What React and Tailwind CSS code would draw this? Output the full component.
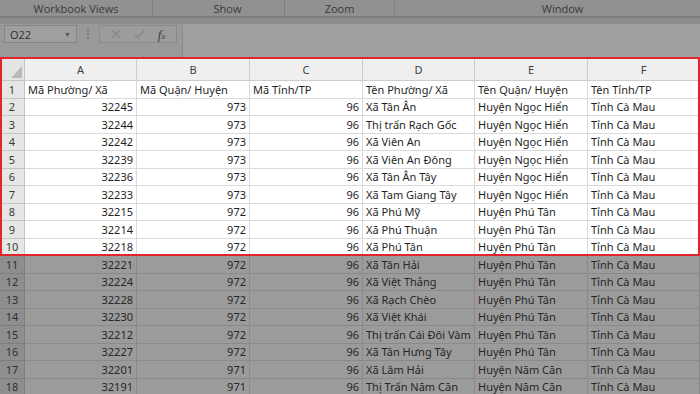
import React from 'react';

const COLS = "grid grid-cols-[25px_112px_113px_113px_112px_113px_112px]";

const rows = [
    ["Mã Phường/ Xã", "Mã Quận/ Huyện", "Mã Tỉnh/TP", "Tên Phường/ Xã", "Tên Quận/ Huyện", "Tên Tỉnh/TP"],
    [32245, 973, 96, "Xã Tân Ân", "Huyện Ngọc Hiển", "Tỉnh Cà Mau"],
    [32244, 973, 96, "Thị trấn Rạch Gốc", "Huyện Ngọc Hiển", "Tỉnh Cà Mau"],
    [32242, 973, 96, "Xã Viên An", "Huyện Ngọc Hiển", "Tỉnh Cà Mau"],
    [32239, 973, 96, "Xã Viên An Đông", "Huyện Ngọc Hiển", "Tỉnh Cà Mau"],
    [32236, 973, 96, "Xã Tân Ân Tây", "Huyện Ngọc Hiển", "Tỉnh Cà Mau"],
    [32233, 973, 96, "Xã Tam Giang Tây", "Huyện Ngọc Hiển", "Tỉnh Cà Mau"],
    [32215, 972, 96, "Xã Phú Mỹ", "Huyện Phú Tân", "Tỉnh Cà Mau"],
    [32214, 972, 96, "Xã Phú Thuận", "Huyện Phú Tân", "Tỉnh Cà Mau"],
    [32218, 972, 96, "Xã Phú Tân", "Huyện Phú Tân", "Tỉnh Cà Mau"],
    [32221, 972, 96, "Xã Tân Hải", "Huyện Phú Tân", "Tỉnh Cà Mau"],
    [32224, 972, 96, "Xã Việt Thắng", "Huyện Phú Tân", "Tỉnh Cà Mau"],
    [32228, 972, 96, "Xã Rạch Chèo", "Huyện Phú Tân", "Tỉnh Cà Mau"],
    [32230, 972, 96, "Xã Việt Khái", "Huyện Phú Tân", "Tỉnh Cà Mau"],
    [32212, 972, 96, "Thị trấn Cái Đôi Vàm", "Huyện Phú Tân", "Tỉnh Cà Mau"],
    [32227, 972, 96, "Xã Tân Hưng Tây", "Huyện Phú Tân", "Tỉnh Cà Mau"],
    [32201, 971, 96, "Xã Lâm Hải", "Huyện Năm Căn", "Tỉnh Cà Mau"],
    [32191, 971, 96, "Thị Trấn Năm Căn", "Huyện Năm Căn", "Tỉnh Cà Mau"],
];

const Row = ({ n, cells, dim }) => {
    const cell = dim
        ? "h-[17.5px] border-r border-b border-[#8a8a8a] bg-[#9b9b9b] text-[#262626]"
        : "h-[17.5px] border-r border-b border-[#dadada] bg-white text-[#1f1f1f]";
    return (
        <div className={COLS}>
            <div className={`h-[17.5px] flex items-center justify-center border-r border-b ${dim ? "bg-[#8e8e8e] border-[#7d7d7d] text-[#2e2e2e]" : "bg-[#e6e6e6] border-[#c4c4c4] text-[#3a3a3a]"}`}>
                {n}
            </div>
            {cells.map((v, i) => (
                <div
                    key={i}
                    className={`${cell} flex items-center px-[3px] whitespace-nowrap ${typeof v === "number" ? "justify-end" : "justify-start overflow-visible"}`}
                >
                    <span className="relative z-10">{v}</span>
                </div>
            ))}
        </div>
    );
};

const App = () => {
    return (
        <div className="w-[700px] h-[394px] overflow-hidden bg-[#9b9b9b] text-[11px] leading-none font-['Noto_Sans',sans-serif]">
            {/* Ribbon group labels */}
            <div className="h-[16px] bg-[#919191] flex items-center text-[11px] text-[#3a3a3a] font-['Open_Sans',sans-serif]">
                <div className="w-[153px] h-full flex items-center justify-center border-r border-[#7f7f7f]">Workbook Views</div>
                <div className="w-[132px] h-full flex items-center justify-center pl-[18px] border-r border-[#7f7f7f]">Show</div>
                <div className="w-[110px] h-full flex items-center justify-center border-r border-[#7f7f7f]">Zoom</div>
                <div className="flex-1 h-full flex items-center justify-center pl-[30px]">Window</div>
            </div>
            <div className="h-[2px] bg-[#7e7e7e]" />
            <div className="h-[6px] bg-[#8b8b8b]" />

            {/* Formula bar */}
            <div className="h-[33px] flex bg-[#999999]">
                <div className="w-[182px] flex items-start pt-[1px] pl-[4px] gap-[10px]">
                    <div className="w-[73px] h-[18px] border border-[#858585] bg-[#9f9f9f] flex items-center justify-between px-[5px] text-[11px] text-[#2f2f2f] font-['Open_Sans',sans-serif]">
                        <span>O22</span>
                        <span className="text-[7px] text-[#555]">▼</span>
                    </div>
                    <div className="flex flex-col gap-[2px] pt-[4px]">
                        <span className="w-[2px] h-[2px] bg-[#7c7c7c]" />
                        <span className="w-[2px] h-[2px] bg-[#7c7c7c]" />
                        <span className="w-[2px] h-[2px] bg-[#7c7c7c]" />
                    </div>
                    <div className="w-[78px] h-[18px] border border-[#8b8b8b] bg-[#9c9c9c] flex items-center justify-around px-[4px]">
                        <svg width="10" height="10" viewBox="0 0 10 10" stroke="#858585" strokeWidth="1.2"><path d="M1 1l8 8M9 1l-8 8" /></svg>
                        <svg width="11" height="10" viewBox="0 0 11 10" stroke="#858585" strokeWidth="1.3" fill="none"><path d="M1 5.5l3 3 6-7" /></svg>
                        <span className="italic text-[13px] text-[#3e3e3e] font-['Liberation_Serif',serif]">f<span className="text-[9px]">x</span></span>
                    </div>
                </div>
                <div className="flex-1 bg-[#a0a0a0] border-l border-[#8a8a8a]" />
            </div>

            {/* Highlighted block */}
            <div className="relative">
                <div className={COLS}>
                    <div className="h-[24px] bg-[#e4e4e4] border-r border-b border-[#c4c4c4] flex items-end justify-end p-[2px]">
                        <svg width="11" height="12" viewBox="0 0 11 12"><path d="M11 0V12H0Z" fill="#b9b9b9" /></svg>
                    </div>
                    {["A", "B", "C", "D", "E", "F"].map((c) => (
                        <div key={c} className="h-[24px] bg-[#efefef] border-r border-b border-[#cdcdcd] flex items-center justify-center pt-[2px] text-[#3f3f3f]">
                            {c}
                        </div>
                    ))}
                </div>
                {rows.slice(0, 10).map((r, i) => (
                    <Row key={i} n={i + 1} cells={r} />
                ))}
                <div className="absolute inset-0 border-2 border-[#e0262b] pointer-events-none z-20" />
            </div>

            {/* Dimmed rows */}
            {rows.slice(10).map((r, i) => (
                <Row key={i} n={i + 11} cells={r} dim />
            ))}
        </div>
    );
};

export default App;
